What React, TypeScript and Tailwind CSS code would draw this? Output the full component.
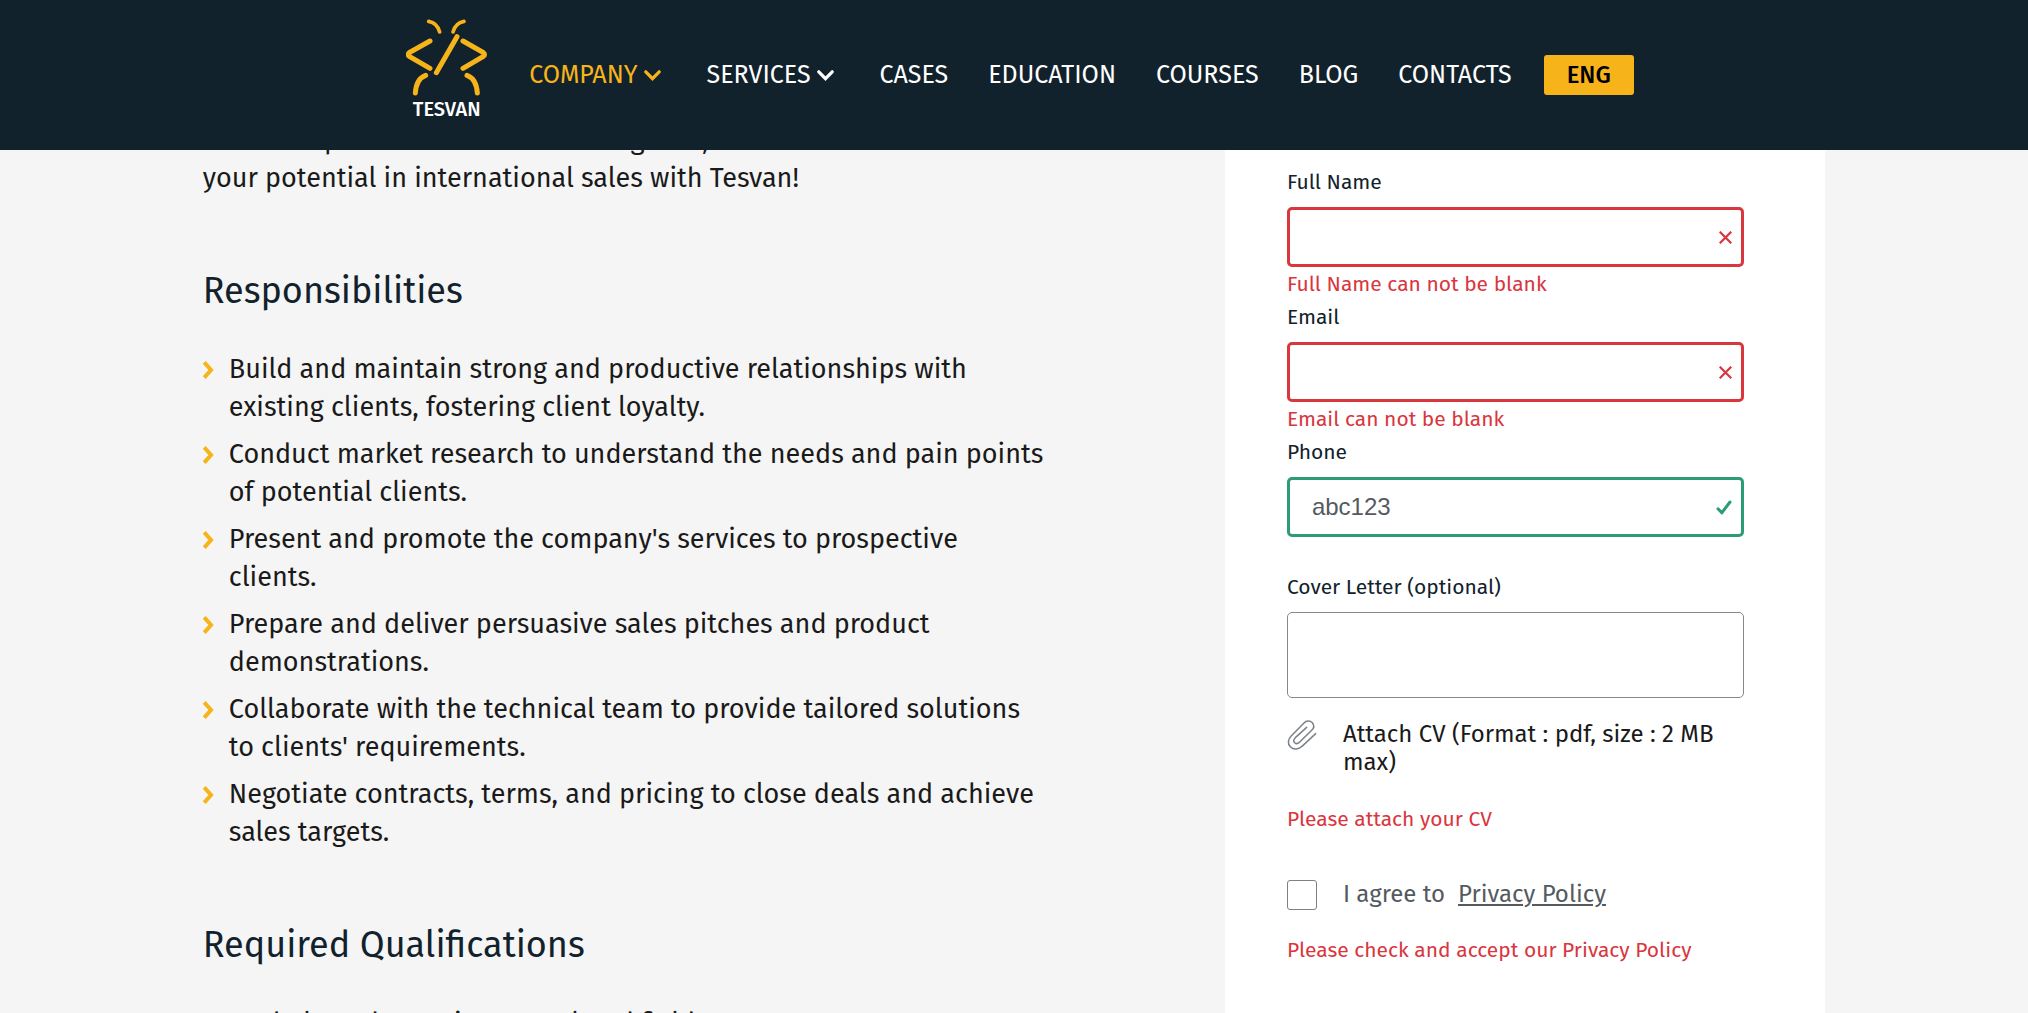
import React from "react";

const responsibilities = [
  "Build and maintain strong and productive relationships with existing clients, fostering client loyalty.",
  "Conduct market research to understand the needs and pain points of potential clients.",
  "Present and promote the company's services to prospective clients.",
  "Prepare and deliver persuasive sales pitches and product demonstrations.",
  "Collaborate with the technical team to provide tailored solutions to clients' requirements.",
  "Negotiate contracts, terms, and pricing to close deals and achieve sales targets.",
];

const qualifications = ["Bachelor's degree in IT or related field."];

const navItems = [
  { label: "COMPANY", menu: true, active: true },
  { label: "SERVICES", menu: true },
  { label: "CASES" },
  { label: "EDUCATION" },
  { label: "COURSES" },
  { label: "BLOG" },
  { label: "CONTACTS" },
];

function Logo() {
  return (
    <a href="#home" className="flex flex-col items-center">
      <svg viewBox="80 58 243 231" className="h-[77px] w-[81px]" fill="none" stroke="#f7b41a" strokeLinecap="round" aria-hidden="true">
        <g strokeWidth="11">
          <path d="M148 65Q174 70 181 97" />
          <path d="M254 65Q228 70 221 97" />
        </g>
        <g strokeWidth="15">
          <path d="M152 124L90 159Q83 165 90 170L152 206" />
          <path d="M251 124L312 159Q319 165 312 170L251 206" />
          <path d="M233 111L171 219" />
          <path d="M139 227Q111 237 108 280" />
          <path d="M263 227Q291 237 294 280" />
        </g>
      </svg>
      <span className="text-[20px] leading-[26px] font-medium text-white">TESVAN</span>
    </a>
  );
}

function ChevronDown() {
  return (
    <svg viewBox="0 0 17 11" className="h-[11px] w-[17px]" fill="none" stroke="currentColor" strokeWidth="3.2" strokeLinecap="round" aria-hidden="true">
      <path d="M1.8 1.8L8.5 8.6L15.2 1.8" />
    </svg>
  );
}

function Header() {
  return (
    <header className="relative z-10 flex h-[150px] shrink-0 justify-center bg-[#12222c] pl-3">
      <div className="flex items-start gap-[42px] pt-[19px]">
        <Logo />
        <nav className="flex items-center gap-10 pt-9 text-[25px] leading-10 text-white">
          {navItems.map((item) =>
            item.menu ? (
              <button
                key={item.label}
                type="button"
                className={item.active ? "flex items-center gap-[6px] pr-[6px] text-[#f7b41a]" : "flex items-center gap-[6px] pr-[6px]"}
              >
                {item.label}
                <ChevronDown />
              </button>
            ) : (
              <a key={item.label} href={"#" + item.label.toLowerCase()}>
                {item.label}
              </a>
            ),
          )}
          <button type="button" className="-ml-2 h-10 w-[90px] rounded-[3px] bg-[#f7b41a] text-[24px] leading-10 font-medium text-black">
            ENG
          </button>
        </nav>
      </div>
    </header>
  );
}

function BulletList({ items }: { items: string[] }) {
  return (
    <ul className="mt-[37px] flex flex-col gap-[9px] text-[27px] leading-[38px]">
      {items.map((item) => (
        <li key={item} className="flex items-start gap-[15px]">
          <span className="flex h-10 shrink-0 items-center">
            <svg viewBox="0 0 11 18" className="h-[18px] w-[11px]" fill="none" stroke="#f7b41a" strokeWidth="4" aria-hidden="true">
              <path d="M1.2 1.4L8 9L1.2 16.6" />
            </svg>
          </span>
          <span>{item}</span>
        </li>
      ))}
    </ul>
  );
}

function FieldLabel({ id, children }: { id: string; children: React.ReactNode }) {
  return (
    <label htmlFor={id} className="block text-[21px] leading-[25px] text-[#12222c]">
      {children}
    </label>
  );
}

function ErrorText({ children }: { children: React.ReactNode }) {
  return <p className="text-[21px] leading-[25px] text-[#d9363e]">{children}</p>;
}

function TextField({ id, label, type, value, error }: { id: string; label: string; type: string; value?: string; error?: string }) {
  return (
    <div>
      <FieldLabel id={id}>{label}</FieldLabel>
      <div className="relative mt-3">
        <input
          id={id}
          type={type}
          defaultValue={value}
          aria-invalid={error ? true : undefined}
          className={
            error
              ? "block h-[60px] w-full rounded-[5px] border-3 border-[#d9363e] bg-white px-[22px] outline-none"
              : "block h-[60px] w-full rounded-[5px] border-3 border-[#2b9c74] bg-white px-[22px] font-['Liberation_Sans',Arial,sans-serif] text-[24px] text-[#555a5f] outline-none"
          }
        />
        <span className="pointer-events-none absolute inset-y-0 right-3 flex items-center">
          {error ? (
            <svg viewBox="0 0 13 13" className="size-[13px]" fill="none" stroke="#d9363e" strokeWidth="2.2" aria-hidden="true">
              <path d="M0.7 0.7L12.3 12.3M12.3 0.7L0.7 12.3" />
            </svg>
          ) : (
            <svg viewBox="0 0 16 15" className="h-[15px] w-4" fill="none" stroke="#2b9c74" strokeWidth="3" strokeLinecap="round" strokeLinejoin="round" aria-hidden="true">
              <path d="M2 8.8L5.8 12.8L14 2" />
            </svg>
          )}
        </span>
      </div>
      <div className="h-[38px] pt-[5px]">{error && <ErrorText>{error}</ErrorText>}</div>
    </div>
  );
}

function ApplicationForm() {
  return (
    <form className="w-[37%] bg-white pt-[49px] pr-[81px] pl-[62px]">
      <TextField id="full-name" label="Full Name" type="text" error="Full Name can not be blank" />
      <TextField id="email" label="Email" type="email" error="Email can not be blank" />
      <TextField id="phone" label="Phone" type="tel" value="abc123" />
      <FieldLabel id="cover-letter">Cover Letter (optional)</FieldLabel>
      <textarea id="cover-letter" className="mt-3 block h-[86px] w-full resize-none rounded-[5px] border border-[#85898e] bg-white px-6 py-4 outline-none" />
      <label htmlFor="cv" className="mt-[22px] flex cursor-pointer items-start gap-[26px]">
        <svg viewBox="48 29 90 90" className="size-[30px] shrink-0" fill="none" stroke="#7c8087" strokeWidth="4.5" strokeLinecap="round" aria-hidden="true">
          <path d="M134 70L93 108C83 118 67 119 58 109C49 100 51 87 60 78L99 38C106 31 117 30 124 37C130 44 129 53 122 60L86 95C81 100 75 101 71 97C67 93 68 87 73 82L107 51" />
        </svg>
        <span className="text-[24px] leading-7">Attach CV (Format : pdf, size : 2 MB max)</span>
        <input id="cv" type="file" accept="application/pdf" className="sr-only" />
      </label>
      <div className="mt-[31px]">
        <ErrorText>Please attach your CV</ErrorText>
      </div>
      <div className="mt-12 mb-7 flex items-start gap-[26px] text-[24px] leading-7 text-[#555a5f]">
        <input id="agree" type="checkbox" className="size-[30px] shrink-0 appearance-none rounded-[3px] border border-[#7c8087] bg-white" />
        <p className="flex gap-[13px]">
          <label htmlFor="agree">I agree to</label>
          <a href="#privacy-policy" className="underline decoration-2 underline-offset-2">
            Privacy Policy
          </a>
        </p>
      </div>
      <ErrorText>Please check and accept our Privacy Policy</ErrorText>
    </form>
  );
}

export default function App() {
  return (
    <div className="flex h-screen flex-col overflow-hidden bg-[#f5f5f5] font-['Fira_Sans','Noto_Sans',sans-serif] text-[#1a1a1a]">
      <Header />
      <main className="mx-auto -mt-[29px] flex w-4/5 flex-1 justify-between">
        <section className="w-[52%]">
          <p className="text-[27px] leading-[38px]">
            Take a step to a career worth having now, unlock
            <br />
            your potential in international sales with Tesvan!
          </p>
          <h2 className="mt-[72px] text-[36px] leading-[44px] text-[#12222c]">Responsibilities</h2>
          <BulletList items={responsibilities} />
          <h2 className="mt-[72px] text-[36px] leading-[44px] text-[#12222c]">Required Qualifications</h2>
          <BulletList items={qualifications} />
        </section>
        <ApplicationForm />
      </main>
    </div>
  );
}
